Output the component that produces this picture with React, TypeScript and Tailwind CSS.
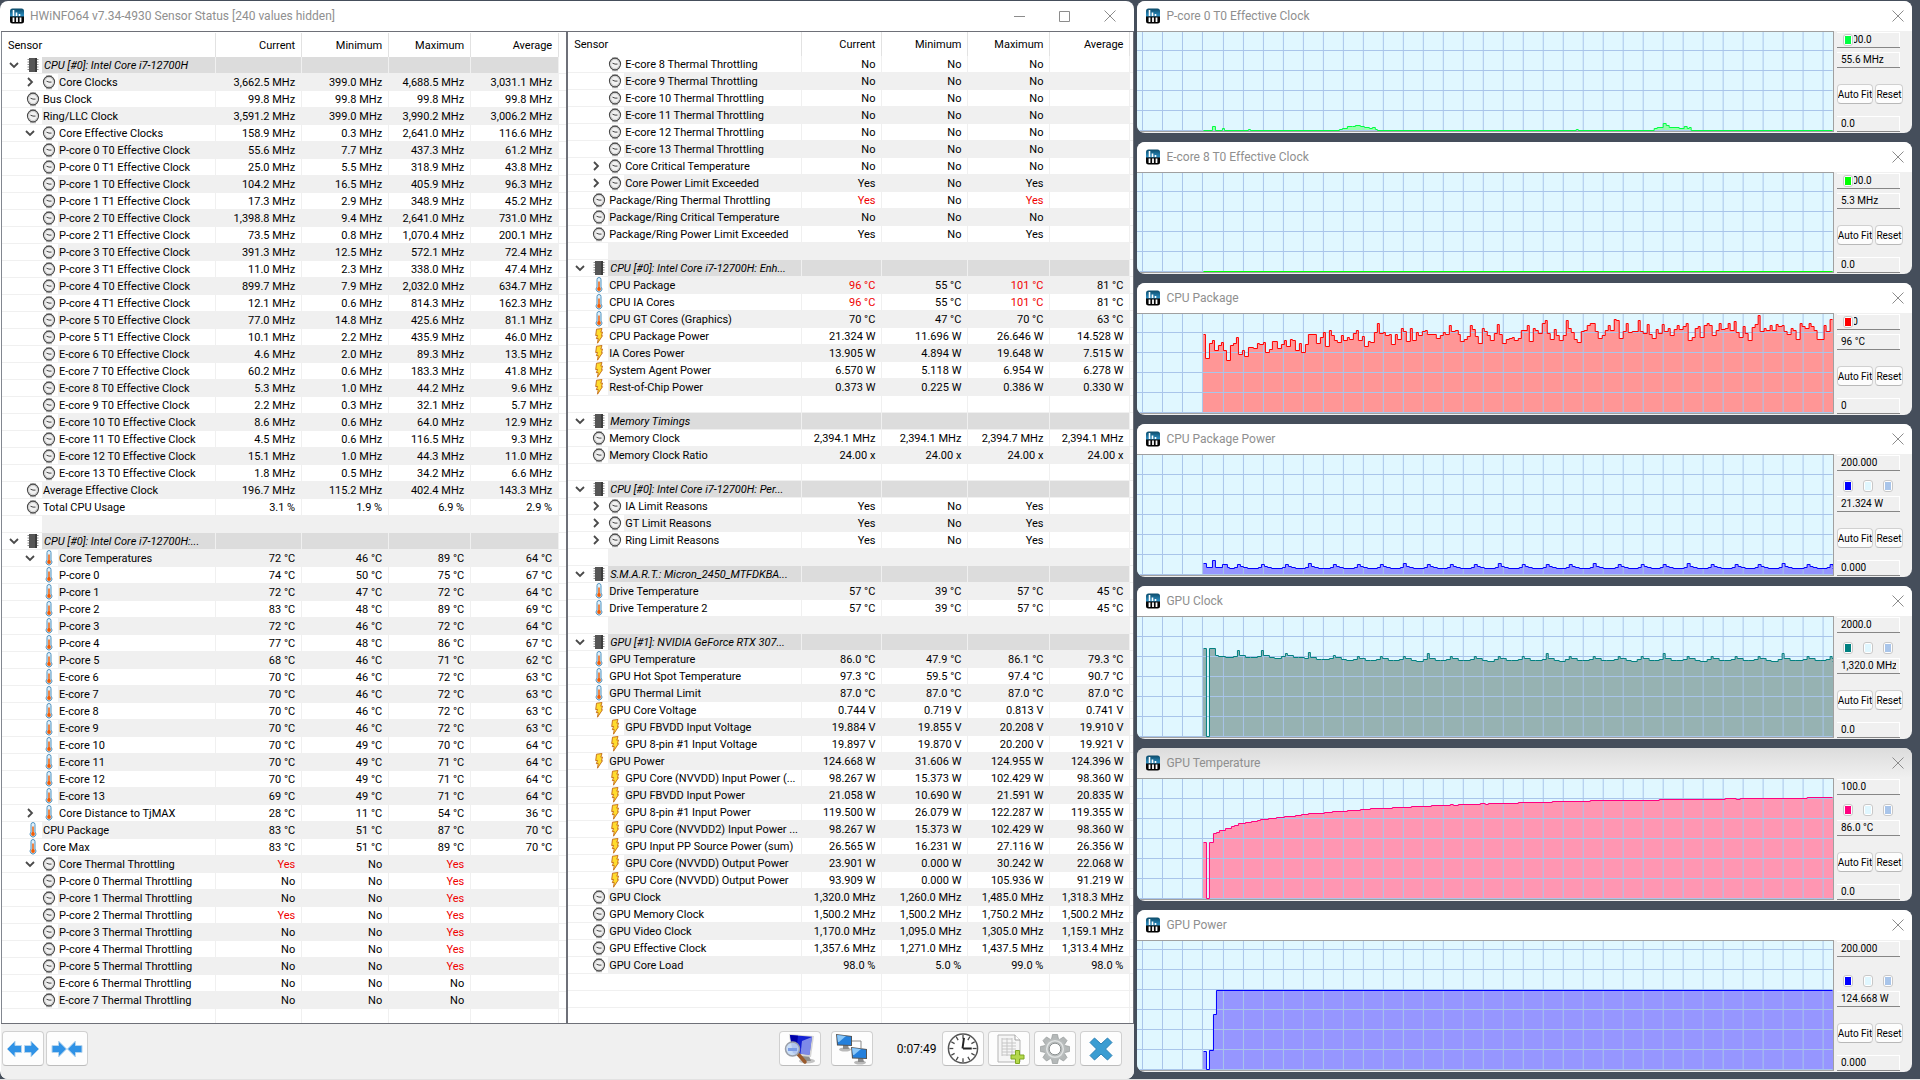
import { useState } from "react";

type IconName = "chip" | "gauge" | "thermo" | "bolt";
type Fold = "" | "open" | "closed";
// depth, fold state, icon, label, current / minimum / maximum / average
// a leading "!" on a value marks it as an alert
type Row = [number, Fold, IconName | "", string, string[]];
type Point = [number, number];

const mhz = (a: string, b: string, c: string, d: string) => [a, b, c, d].map((v) => `${v} MHz`);
const deg = (a: string, b: string, c: string, d: string) => [a, b, c, d].map((v) => `${v} °C`);
const watt = (a: string, b: string, c: string, d: string) => [a, b, c, d].map((v) => `${v} W`);
const volt = (a: string, b: string, c: string, d: string) => [a, b, c, d].map((v) => `${v} V`);
const flag = (a: string, b: string, c: string) => [a, b, c, ""];
const BLANK: Row = [0, "", "", "", []];
const group = (name: string): Row => [0, "open", "chip", name, []];

const LEFT_ROWS: Row[] = [
  group("CPU [#0]: Intel Core i7-12700H"),
  [2, "closed", "gauge", "Core Clocks", mhz("3,662.5", "399.0", "4,688.5", "3,031.1")],
  [1, "", "gauge", "Bus Clock", mhz("99.8", "99.8", "99.8", "99.8")],
  [1, "", "gauge", "Ring/LLC Clock", mhz("3,591.2", "399.0", "3,990.2", "3,006.2")],
  [2, "open", "gauge", "Core Effective Clocks", mhz("158.9", "0.3", "2,641.0", "116.6")],
  [2, "", "gauge", "P-core 0 T0 Effective Clock", mhz("55.6", "7.7", "437.3", "61.2")],
  [2, "", "gauge", "P-core 0 T1 Effective Clock", mhz("25.0", "5.5", "318.9", "43.8")],
  [2, "", "gauge", "P-core 1 T0 Effective Clock", mhz("104.2", "16.5", "405.9", "96.3")],
  [2, "", "gauge", "P-core 1 T1 Effective Clock", mhz("17.3", "2.9", "348.9", "45.2")],
  [2, "", "gauge", "P-core 2 T0 Effective Clock", mhz("1,398.8", "9.4", "2,641.0", "731.0")],
  [2, "", "gauge", "P-core 2 T1 Effective Clock", mhz("73.5", "0.8", "1,070.4", "200.1")],
  [2, "", "gauge", "P-core 3 T0 Effective Clock", mhz("391.3", "12.5", "572.1", "72.4")],
  [2, "", "gauge", "P-core 3 T1 Effective Clock", mhz("11.0", "2.3", "338.0", "47.4")],
  [2, "", "gauge", "P-core 4 T0 Effective Clock", mhz("899.7", "7.9", "2,032.0", "634.7")],
  [2, "", "gauge", "P-core 4 T1 Effective Clock", mhz("12.1", "0.6", "814.3", "162.3")],
  [2, "", "gauge", "P-core 5 T0 Effective Clock", mhz("77.0", "14.8", "425.6", "81.1")],
  [2, "", "gauge", "P-core 5 T1 Effective Clock", mhz("10.1", "2.2", "435.9", "46.0")],
  [2, "", "gauge", "E-core 6 T0 Effective Clock", mhz("4.6", "2.0", "89.3", "13.5")],
  [2, "", "gauge", "E-core 7 T0 Effective Clock", mhz("60.2", "0.6", "183.3", "41.8")],
  [2, "", "gauge", "E-core 8 T0 Effective Clock", mhz("5.3", "1.0", "44.2", "9.6")],
  [2, "", "gauge", "E-core 9 T0 Effective Clock", mhz("2.2", "0.3", "32.1", "5.7")],
  [2, "", "gauge", "E-core 10 T0 Effective Clock", mhz("8.6", "0.6", "64.0", "12.9")],
  [2, "", "gauge", "E-core 11 T0 Effective Clock", mhz("4.5", "0.6", "116.5", "9.3")],
  [2, "", "gauge", "E-core 12 T0 Effective Clock", mhz("15.1", "1.0", "44.3", "11.0")],
  [2, "", "gauge", "E-core 13 T0 Effective Clock", mhz("1.8", "0.5", "34.2", "6.6")],
  [1, "", "gauge", "Average Effective Clock", mhz("196.7", "115.2", "402.4", "143.3")],
  [1, "", "gauge", "Total CPU Usage", ["3.1 %", "1.9 %", "6.9 %", "2.9 %"]],
  BLANK,
  group("CPU [#0]: Intel Core i7-12700H:..."),
  [2, "open", "thermo", "Core Temperatures", deg("72", "46", "89", "64")],
  [2, "", "thermo", "P-core 0", deg("74", "50", "75", "67")],
  [2, "", "thermo", "P-core 1", deg("72", "47", "72", "64")],
  [2, "", "thermo", "P-core 2", deg("83", "48", "89", "69")],
  [2, "", "thermo", "P-core 3", deg("72", "46", "72", "64")],
  [2, "", "thermo", "P-core 4", deg("77", "48", "86", "67")],
  [2, "", "thermo", "P-core 5", deg("68", "46", "71", "62")],
  [2, "", "thermo", "E-core 6", deg("70", "46", "72", "63")],
  [2, "", "thermo", "E-core 7", deg("70", "46", "72", "63")],
  [2, "", "thermo", "E-core 8", deg("70", "46", "72", "63")],
  [2, "", "thermo", "E-core 9", deg("70", "46", "72", "63")],
  [2, "", "thermo", "E-core 10", deg("70", "49", "70", "64")],
  [2, "", "thermo", "E-core 11", deg("70", "49", "71", "64")],
  [2, "", "thermo", "E-core 12", deg("70", "49", "71", "64")],
  [2, "", "thermo", "E-core 13", deg("69", "49", "71", "64")],
  [2, "closed", "thermo", "Core Distance to TjMAX", deg("28", "11", "54", "36")],
  [1, "", "thermo", "CPU Package", deg("83", "51", "87", "70")],
  [1, "", "thermo", "Core Max", deg("83", "51", "89", "70")],
  [2, "open", "gauge", "Core Thermal Throttling", flag("!Yes", "No", "!Yes")],
  [2, "", "gauge", "P-core 0 Thermal Throttling", flag("No", "No", "!Yes")],
  [2, "", "gauge", "P-core 1 Thermal Throttling", flag("No", "No", "!Yes")],
  [2, "", "gauge", "P-core 2 Thermal Throttling", flag("!Yes", "No", "!Yes")],
  [2, "", "gauge", "P-core 3 Thermal Throttling", flag("No", "No", "!Yes")],
  [2, "", "gauge", "P-core 4 Thermal Throttling", flag("No", "No", "!Yes")],
  [2, "", "gauge", "P-core 5 Thermal Throttling", flag("No", "No", "!Yes")],
  [2, "", "gauge", "E-core 6 Thermal Throttling", flag("No", "No", "No")],
  [2, "", "gauge", "E-core 7 Thermal Throttling", flag("No", "No", "No")],
];

const RIGHT_ROWS: Row[] = [
  [2, "", "gauge", "E-core 8 Thermal Throttling", flag("No", "No", "No")],
  [2, "", "gauge", "E-core 9 Thermal Throttling", flag("No", "No", "No")],
  [2, "", "gauge", "E-core 10 Thermal Throttling", flag("No", "No", "No")],
  [2, "", "gauge", "E-core 11 Thermal Throttling", flag("No", "No", "No")],
  [2, "", "gauge", "E-core 12 Thermal Throttling", flag("No", "No", "No")],
  [2, "", "gauge", "E-core 13 Thermal Throttling", flag("No", "No", "No")],
  [2, "closed", "gauge", "Core Critical Temperature", flag("No", "No", "No")],
  [2, "closed", "gauge", "Core Power Limit Exceeded", flag("Yes", "No", "Yes")],
  [1, "", "gauge", "Package/Ring Thermal Throttling", flag("!Yes", "No", "!Yes")],
  [1, "", "gauge", "Package/Ring Critical Temperature", flag("No", "No", "No")],
  [1, "", "gauge", "Package/Ring Power Limit Exceeded", flag("Yes", "No", "Yes")],
  BLANK,
  group("CPU [#0]: Intel Core i7-12700H: Enh..."),
  [1, "", "thermo", "CPU Package", deg("!96", "55", "!101", "81")],
  [1, "", "thermo", "CPU IA Cores", deg("!96", "55", "!101", "81")],
  [1, "", "thermo", "CPU GT Cores (Graphics)", deg("70", "47", "70", "63")],
  [1, "", "bolt", "CPU Package Power", watt("21.324", "11.696", "26.646", "14.528")],
  [1, "", "bolt", "IA Cores Power", watt("13.905", "4.894", "19.648", "7.515")],
  [1, "", "bolt", "System Agent Power", watt("6.570", "5.118", "6.954", "6.278")],
  [1, "", "bolt", "Rest-of-Chip Power", watt("0.373", "0.225", "0.386", "0.330")],
  BLANK,
  group("Memory Timings"),
  [1, "", "gauge", "Memory Clock", mhz("2,394.1", "2,394.1", "2,394.7", "2,394.1")],
  [1, "", "gauge", "Memory Clock Ratio", ["24.00 x", "24.00 x", "24.00 x", "24.00 x"]],
  BLANK,
  group("CPU [#0]: Intel Core i7-12700H: Per..."),
  [2, "closed", "gauge", "IA Limit Reasons", flag("Yes", "No", "Yes")],
  [2, "closed", "gauge", "GT Limit Reasons", flag("Yes", "No", "Yes")],
  [2, "closed", "gauge", "Ring Limit Reasons", flag("Yes", "No", "Yes")],
  BLANK,
  group("S.M.A.R.T.: Micron_2450_MTFDKBA..."),
  [1, "", "thermo", "Drive Temperature", deg("57", "39", "57", "45")],
  [1, "", "thermo", "Drive Temperature 2", deg("57", "39", "57", "45")],
  BLANK,
  group("GPU [#1]: NVIDIA GeForce RTX 307..."),
  [1, "", "thermo", "GPU Temperature", deg("86.0", "47.9", "86.1", "79.3")],
  [1, "", "thermo", "GPU Hot Spot Temperature", deg("97.3", "59.5", "97.4", "90.7")],
  [1, "", "thermo", "GPU Thermal Limit", deg("87.0", "87.0", "87.0", "87.0")],
  [1, "", "bolt", "GPU Core Voltage", volt("0.744", "0.719", "0.813", "0.741")],
  [2, "", "bolt", "GPU FBVDD Input Voltage", volt("19.884", "19.855", "20.208", "19.910")],
  [2, "", "bolt", "GPU 8-pin #1 Input Voltage", volt("19.897", "19.870", "20.200", "19.921")],
  [1, "", "bolt", "GPU Power", watt("124.668", "31.606", "124.955", "124.396")],
  [2, "", "bolt", "GPU Core (NVVDD) Input Power (...", watt("98.267", "15.373", "102.429", "98.360")],
  [2, "", "bolt", "GPU FBVDD Input Power", watt("21.058", "10.690", "21.591", "20.835")],
  [2, "", "bolt", "GPU 8-pin #1 Input Power", watt("119.500", "26.079", "122.287", "119.355")],
  [2, "", "bolt", "GPU Core (NVVDD2) Input Power ...", watt("98.267", "15.373", "102.429", "98.360")],
  [2, "", "bolt", "GPU Input PP Source Power (sum)", watt("26.565", "16.231", "27.116", "26.356")],
  [2, "", "bolt", "GPU Core (NVVDD) Output Power", watt("23.901", "0.000", "30.242", "22.068")],
  [2, "", "bolt", "GPU Core (NVVDD) Output Power", watt("93.909", "0.000", "105.936", "91.219")],
  [1, "", "gauge", "GPU Clock", mhz("1,320.0", "1,260.0", "1,485.0", "1,318.3")],
  [1, "", "gauge", "GPU Memory Clock", mhz("1,500.2", "1,500.2", "1,750.2", "1,500.2")],
  [1, "", "gauge", "GPU Video Clock", mhz("1,170.0", "1,095.0", "1,305.0", "1,159.1")],
  [1, "", "gauge", "GPU Effective Clock", mhz("1,357.6", "1,271.0", "1,437.5", "1,313.4")],
  [1, "", "gauge", "GPU Core Load", ["98.0 %", "5.0 %", "99.0 %", "98.0 %"]],
];

// ---- graph traces: [x, y] steps, y measured from the top of the plot ----

const P_CORE: Point[] = [
  [65, 98], [74, 94], [77, 98], [84, 96], [86, 98], [110, 97], [112, 98], [201, 97], [204, 96], [209, 94],
  [214, 94], [217, 93], [222, 94], [226, 95], [231, 96], [234, 95], [237, 97], [239, 98], [438, 97], [440, 98],
  [516, 96], [519, 95], [525, 91], [528, 93], [531, 95], [541, 96], [546, 94], [549, 96], [551, 95], [553, 98],
];

const E_CORE: Point[] = [[65, 98]];

// logged at three units per pixel
const PACKAGE_LOG =
  "9:64 16:136 28:91 37:82 43:112 55:97 64:88 70:112 79:142 91:97 100:91 108:73 115:124 127:112 133:130 145:103 " +
  "160:106 172:91 178:94 190:88 196:118 208:109 217:85 232:106 244:94 253:82 259:100 271:79 277:82 286:112 298:91 " +
  "304:118 316:94 325:64 349:91 361:73 370:58 376:100 388:52 394:67 403:82 412:88 424:67 430:82 442:73 448:79 " +
  "460:61 469:52 475:82 487:70 493:100 505:85 511:88 523:58 532:31 538:61 550:58 556:67 568:64 574:94 586:64 " +
  "592:79 604:46 610:55 619:85 631:46 637:82 649:58 655:67 667:55 676:52 682:64 709:76 721:67 730:58 736:64 " +
  "748:37 754:55 766:52 773:64 781:85 793:79 802:70 811:37 817:49 826:70 835:91 847:46 853:55 862:67 871:82 " +
  "883:61 892:34 898:64 907:91 919:79 928:76 937:73 943:82 955:76 964:52 982:37 988:85 1000:46 1006:52 1015:61 " +
  "1027:31 1036:22 1042:61 1051:79 1063:49 1069:67 1078:82 1090:67 1099:22 1105:46 1114:58 1123:79 1132:88 " +
  "1144:55 1153:52 1162:37 1171:31 1186:55 1195:76 1207:67 1216:52 1225:37 1231:52 1243:19 1249:22 1258:76 " +
  "1270:55 1279:31 1285:58 1297:55 1315:22 1321:55 1330:61 1342:34 1348:64 1357:76 1369:49 1375:61 1387:34 " +
  "1393:55 1405:46 1411:67 1423:49 1432:37 1438:49 1450:40 1459:31 1465:82 1477:73 1486:46 1495:40 1501:73 " +
  "1513:37 1522:31 1528:37 1537:67 1549:52 1558:31 1564:49 1576:46 1585:31 1591:52 1603:25 1609:58 1618:73 " +
  "1630:40 1636:61 1645:82 1657:43 1666:34 1675:7 1681:55 1693:46 1699:52 1711:37 1717:52 1729:34 1735:40 " +
  "1747:37 1753:55 1762:64 1774:46 1780:52 1789:79 1801:31 1807:40 1816:46 1828:31 1834:40 1843:52 1852:79 " +
  "1873:37 1879:55 1891:19";

const PACKAGE: Point[] = PACKAGE_LOG.split(" ").map((pair) => {
  const [x, y] = pair.split(":").map(Number);
  return [62 + Math.round(x / 3), Math.round((y - 3) / 3)];
});

const PULSES = [
  100, 124, 148, 171, 196, 220, 243, 266, 290, 313, 337, 361, 385, 409, 432, 456, 481, 504, 526, 550, 574, 598, 621,
  645, 670, 693,
];

const PACKAGE_POWER: Point[] = [
  [65, 108], [68, 112], [74, 105], [77, 112], [84, 109], [89, 112], [91, 113],
  ...PULSES.flatMap((x, i): Point[] => [
    [x - 4, 112],
    [x - 1, i % 4 === 3 ? 108 : 109],
    [x + 2, 111],
    [x + 5, 112],
    [x + 9, 113],
  ]),
];

const GPU_CLOCK: Point[] = [
  [65, 31], [68, 119], [71, 31], [77, 38], [80, 39], [87, 40],
  ...PULSES.flatMap((x, i): Point[] => {
    const base = i < 3 ? 40 : i < 5 ? 42 : 43;
    const tall = i < 2 || i === 8 || i === 18 || i % 5 === 3;
    return [
      [x - 5, base - 1],
      [x - 1, base - (tall ? 7 : 4)],
      [x + 1, base - 2],
      [x + 7, base],
      [x + 12, i % 3 === 1 ? base + 1 : base],
    ];
  }),
];

const GPU_TEMP: Point[] = [
  [65, 63], [68, 119], [71, 63], [75, 54], [78, 53], [81, 51], [87, 49], [93, 47], [96, 46], [100, 44], [107, 43],
  [113, 42], [119, 41], [122, 40], [130, 39], [138, 38], [146, 37], [157, 36], [163, 35], [170, 34], [186, 33],
  [194, 32], [209, 31], [222, 30], [232, 29], [254, 28], [273, 27], [293, 26], [312, 25], [315, 26], [320, 25],
  [342, 24], [347, 25], [350, 24], [380, 23], [414, 22], [452, 21], [521, 20], [587, 19], [598, 20], [602, 19],
  [669, 18],
];

const GPU_POWER: Point[] = [[65, 110], [68, 128], [71, 109], [75, 73], [78, 49]];

type GraphProps = {
  title: string;
  top: string;
  value: string;
  bottom: string;
  height: number;
  line: string;
  fill: string;
  points: Point[];
  compact?: boolean;
  shaded?: boolean;
};

const GRAPHS: GraphProps[] = [
  { title: "P-core 0 T0 Effective Clock", top: "2000.0", value: "55.6 MHz", bottom: "0.0", height: 99, line: "#00ff40", fill: "#96ffac", points: P_CORE, compact: true },
  { title: "E-core 8 T0 Effective Clock", top: "2000.0", value: "5.3 MHz", bottom: "0.0", height: 99, line: "#00ff00", fill: "#96ff96", points: E_CORE, compact: true },
  { title: "CPU Package", top: "100", value: "96 °C", bottom: "0", height: 99, line: "#ff0000", fill: "#ff9696", points: PACKAGE, compact: true },
  { title: "CPU Package Power", top: "200.000", value: "21.324 W", bottom: "0.000", height: 120, line: "#0000ff", fill: "#9696ff", points: PACKAGE_POWER },
  { title: "GPU Clock", top: "2000.0", value: "1,320.0 MHz", bottom: "0.0", height: 120, line: "#008080", fill: "#96b2b2", points: GPU_CLOCK },
  { title: "GPU Temperature", top: "100.0", value: "86.0 °C", bottom: "0.0", height: 120, line: "#ff0080", fill: "#ff96b2", points: GPU_TEMP, shaded: true },
  { title: "GPU Power", top: "200.000", value: "124.668 W", bottom: "0.000", height: 129, line: "#0000ff", fill: "#9696ff", points: GPU_POWER },
];

function Logo() {
  return (
    <svg width="16" height="16" viewBox="0 0 16 16" className="shrink-0" aria-hidden="true">
      <defs>
        <linearGradient id="logo" x1="0" y1="0" x2="0" y2="1">
          <stop offset="0" stopColor="#0c4a68" />
          <stop offset="0.5" stopColor="#2b8fc4" />
          <stop offset="0.56" stopColor="#0a0a0a" />
          <stop offset="1" stopColor="#000" />
        </linearGradient>
      </defs>
      <rect x="1" y="0.5" width="14" height="15" rx="2.5" fill="url(#logo)" />
      <path d="M4.5 2v6M7.5 4.5v3.5M10.5 6v2" stroke="#fff" strokeWidth="1.6" />
      <path d="M4.5 9.5v4.5M8 9.5v4.5M11.5 9.5v4.5" stroke="#fff" strokeWidth="1.8" />
    </svg>
  );
}

function SensorIcon({ name }: { name: IconName }) {
  if (name === "chip") {
    return (
      <svg width="16" height="16" viewBox="0 0 16 16" aria-hidden="true">
        <path d="M2.500 2.500h11M2.500 5h11M2.500 7.500h11M2.500 10h11M2.500 12.500h11" stroke="#8c8c8c" />
        <rect x="4" y="1" width="8" height="14" fill="#565656" />
        <path d="M10 1h2v14h-2z" fill="#3c3c3c" />
      </svg>
    );
  }
  if (name === "gauge") {
    return (
      <svg width="16" height="16" viewBox="0 0 16 16" aria-hidden="true">
        <path d="M5 2h6M5 14.500h6" stroke="#b8b8b8" strokeWidth="1.500" />
        <ellipse cx="8" cy="8" rx="5.500" ry="5.800" fill="#f1f1f1" stroke="#4a4a4a" strokeWidth="1.200" />
        <ellipse cx="8" cy="8" rx="4.300" ry="4.600" fill="none" stroke="#d0d0d0" />
        <path d="M5.500 7.200l2.500.9h2.500" fill="none" stroke="#444" />
      </svg>
    );
  }
  if (name === "thermo") {
    return (
      <svg width="16" height="16" viewBox="0 0 16 16" aria-hidden="true">
        <path d="M6 2.500a2 2 0 0 1 4 0v7.500a2.900 2.900 0 1 1-4 0z" fill="#e2f1fb" stroke="#4f93c0" />
        <path d="M8 4.500v7" stroke="#f26a1b" strokeWidth="1.600" />
        <circle cx="8" cy="12" r="1.900" fill="#f25c05" />
      </svg>
    );
  }
  return (
    <svg width="16" height="16" viewBox="0 0 16 16" aria-hidden="true">
      <path
        d="M5.500 1.200l5.500-.7-1.200 3.700 1.700-.2-1 3.700 1 0-5 7.500.7-4.800-1.900.3 1.300-3.300-1.900.2z"
        fill="#ffdc2e"
        stroke="#c26a16"
        strokeWidth="0.900"
      />
    </svg>
  );
}

function Chevron({ fold }: { fold: Fold }) {
  if (!fold) return null;
  return (
    <svg width="10" height="10" viewBox="0 0 10 10" aria-hidden="true">
      <path
        d={fold === "open" ? "M1 3l4 4 4-4" : "M3 1l4 4-4 4"}
        fill="none"
        stroke="#4a4a4a"
        strokeWidth="1.800"
      />
    </svg>
  );
}

function SensorRow({ row, striped }: { row: Row; striped: boolean }) {
  const [depth, fold, icon, label, values] = row;
  const isGroup = icon === "chip";
  const tone = isGroup ? "bg-[#dcdcdc]" : striped ? "bg-[#f0f0f0]" : "bg-white";

  return (
    <tr>
      <td className="border-b border-[#f0f0f0] p-0">
        <div className={`flex h-4 items-center ${depth === 2 ? "pl-5" : "pl-1"}`}>
          <span className="flex w-4 shrink-0 justify-center">
            <Chevron fold={fold} />
          </span>
          <span className="ml-[3px] flex w-4 shrink-0">{icon && <SensorIcon name={icon} />}</span>
          <span
            className={`ml-px h-4 min-w-0 flex-1 truncate leading-[18px] ${tone} ${isGroup ? "pl-0.5 italic" : "pl-px"}`}
          >
            {label}
          </span>
        </div>
      </td>
      {[0, 1, 2, 3].map((i) => {
        const text = values[i] ?? "";
        const alert = text.startsWith("!");
        return (
          <td key={i} className={`border-b border-l border-[#f0f0f0] p-0 ${tone}`}>
            <div
              className={`h-4 pr-1.5 text-right leading-[18px] whitespace-nowrap ${alert ? "text-[#f00000]" : ""}`}
            >
              {alert ? text.slice(1) : text}
            </div>
          </td>
        );
      })}
      <td className="border-b border-l border-[#f0f0f0] p-0" />
    </tr>
  );
}

function SensorTable({ rows, widths, spare }: { rows: Row[]; widths: string[]; spare: number }) {
  return (
    <table className="w-full table-fixed border-separate border-spacing-0">
      <colgroup>
        <col />
        {widths.map((w, i) => (
          <col key={i} className={w} />
        ))}
      </colgroup>
      <thead>
        <tr className="h-6">
          <th className="p-0 pt-0.5 pl-1.5 text-left font-normal">Sensor</th>
          {["Current", "Minimum", "Maximum", "Average"].map((h) => (
            <th key={h} className="border-l border-[#e2e2e2] p-0 pt-0.5 pr-1.5 text-right font-normal">
              {h}
            </th>
          ))}
          <th className="border-l border-[#e2e2e2] p-0" />
        </tr>
      </thead>
      <tbody>
        {rows.map((row, i) => (
          <SensorRow key={i} row={row} striped={i % 2 === 1} />
        ))}
        {Array.from({ length: spare }, (_, i) => (
          <SensorRow key={`spare-${i}`} row={BLANK} striped={false} />
        ))}
      </tbody>
    </table>
  );
}

function ToolButton({ label, children }: { label: string; children: React.ReactNode }) {
  return (
    <button
      aria-label={label}
      className="flex h-[35px] w-[42px] items-center justify-center rounded border border-[#d0d0d0] border-b-[#bcbcbc] bg-[#fdfdfd]"
    >
      {children}
    </button>
  );
}

function Monitor({ x, y }: { x: number; y: number }) {
  return (
    <g transform={`translate(${x} ${y})`}>
      <ellipse cx="9" cy="15.500" rx="6" ry="2" fill="#b9b9b9" />
      <path d="M7 11h5l1 4H7z" fill="#8a8a8a" />
      <path d="M0 0l16 2v10L1 11.500z" fill="#555" />
      <path d="M1 1l14 1.800v8.300L2 10.600z" fill="#2580dc" />
      <path d="M1 1l9 1.100L3 8 2 8z" fill="#8cc8f8" />
    </g>
  );
}

function Toolbar() {
  return (
    <div className="flex items-center gap-1 bg-[#f0f0f0] pt-[7px] pr-3 pb-[13px]">
      <div className="flex items-center gap-0.5 pl-px">
        <ToolButton label="Expand columns">
          <svg width="32" height="20" viewBox="0 0 32 20">
            <path d="M0 10l8-8v4.500h6.500v7H8V18z" fill="#2f92e6" stroke="#b4d4ee" />
            <path d="M32 10l-8-8v4.500h-6.500v7H24V18z" fill="#2f92e6" stroke="#b4d4ee" />
          </svg>
        </ToolButton>
        <ToolButton label="Shrink columns">
          <svg width="32" height="20" viewBox="0 0 32 20">
            <path d="M15.500 10l-8-8v4.500H1v7h6.500V18z" fill="#2f92e6" stroke="#b4d4ee" />
            <path d="M16.500 10l8-8v4.500H31v7h-6.500V18z" fill="#2f92e6" stroke="#b4d4ee" />
          </svg>
        </ToolButton>
      </div>

      <div className="ml-auto flex items-center gap-2.5">
        <ToolButton label="System summary">
          <svg width="32" height="32" viewBox="0 0 32 32">
            <ellipse cx="23" cy="28" rx="8" ry="2.500" fill="#c4c4c4" />
            <path d="M18 23h7l2 5h-9z" fill="#8f8f8f" />
            <path d="M5 1l25 2-3 21L8 22z" fill="#d6d6d6" />
            <path d="M6 2l22 1.800-2.500 18L9 20z" fill="#1522d4" />
            <path d="M6 2l8 .7L12 21l-3-1z" fill="#0000a8" />
            <path d="M18 8l10-4-2.500 17.800-9-1z" fill="#a9b6f2" opacity=".7" />
            <path d="M14 21l7 8" stroke="#9a5a2c" strokeWidth="3.500" strokeLinecap="round" />
            <circle cx="8.500" cy="16" r="7" fill="#c4daf6" fillOpacity=".9" stroke="#9a9fa8" strokeWidth="1.500" />
            <path d="M4 15h9v3H4z" fill="#7a9be6" />
          </svg>
        </ToolButton>
        <ToolButton label="Remote sensors">
          <svg width="32" height="32" viewBox="0 0 32 32">
            <path d="M14 8h11v7" fill="none" stroke="#8b8b8b" />
            <Monitor x={0} y={1} />
            <Monitor x={15} y={14} />
          </svg>
        </ToolButton>
      </div>
      <time className="mr-0.5 ml-5 text-[12px]">0:07:49</time>
      <ToolButton label="Reset timer">
        <svg width="34" height="33" viewBox="0 0 34 34">
          <circle cx="17" cy="17" r="15" fill="#fff" stroke="#555" strokeWidth="1.500" />
          {Array.from({ length: 12 }, (_, i) => (
            <path key={i} d="M17 3v4" stroke="#444" strokeWidth="1.300" transform={`rotate(${i * 30} 17 17)`} />
          ))}
          <path d="M16.500 17L18 6M17 17h9" fill="none" stroke="#222" strokeWidth="2" />
        </svg>
      </ToolButton>
      <ToolButton label="Start logging">
        <svg width="32" height="32" viewBox="0 0 32 32">
          <path d="M5 2h17l5 5v22H5z" fill="#f6f6f6" stroke="#b5b5b5" />
          <path d="M22 2v5h5" fill="#fff" stroke="#a5a5a5" />
          <path d="M9 6h10M9 10h14M9 13h14M9 16h14M9 19h14M9 22h10M9 5v18M14 5v18M19 5v18" stroke="#c6c6c6" />
          <path d="M22.500 17.500h4v4.500h4.500v4h-4.500v4.500h-4v-4.500H18v-4h4.500z" fill="#b4d84c" stroke="#7fa822" />
        </svg>
      </ToolButton>
      <ToolButton label="Settings">
        <svg width="32" height="32" viewBox="0 0 32 32">
          {Array.from({ length: 8 }, (_, i) => (
            <path
              key={i}
              d="M12.500 6l1-4.500h5l1 4.500z"
              fill="#b4b8b8"
              stroke="#8b9090"
              strokeWidth=".6"
              transform={`rotate(${i * 45} 16 16)`}
            />
          ))}
          <circle cx="16" cy="16" r="8.500" fill="none" stroke="#b8bcbc" strokeWidth="5" />
          <circle cx="16" cy="16" r="5.800" fill="#fff" stroke="#8b9090" />
          <circle cx="16" cy="16" r="8.300" fill="none" stroke="#dfe2e2" strokeWidth="1.500" />
        </svg>
      </ToolButton>
      <ToolButton label="Close sensors">
        <svg width="26" height="26" viewBox="0 0 26 26">
          <path
            d="M6.500 2L13 8l6.500-6L24 6.500 17.500 13l6.500 6.500-4.500 4.500L13 18l-6.500 6L2 19.500 8.500 13 2 6.500z"
            fill="#3b9dd2"
            stroke="#2a80b4"
            strokeLinejoin="round"
          />
        </svg>
      </ToolButton>
    </div>
  );
}

function CloseGlyph() {
  return (
    <svg width="12" height="12" viewBox="0 0 12 12" aria-hidden="true">
      <path d="M.5.5l11 11M11.500.5l-11 11" stroke="#8c8c8c" />
    </svg>
  );
}

function MainWindow() {
  return (
    <main className="flex min-w-0 flex-[1134] flex-col overflow-hidden rounded-lg bg-white pl-px">
      <header className="flex h-[30px] items-center pr-4.5 pl-2">
        <Logo />
        <h1 className="ml-[5px] flex-1 text-[12px] text-[#8f8f8f]">
          HWiNFO64 v7.34-4930 Sensor Status [240 values hidden]
        </h1>
        <div className="flex items-center gap-[34px]">
          <button aria-label="Minimize">
            <svg width="11" height="11" viewBox="0 0 11 11">
              <path d="M0 5.500h11" stroke="#8c8c8c" />
            </svg>
          </button>
          <button aria-label="Maximize">
            <svg width="11" height="11" viewBox="0 0 11 11">
              <path d="M.5.5h10v10H.5z" fill="none" stroke="#8c8c8c" />
            </svg>
          </button>
          <button aria-label="Close">
            <CloseGlyph />
          </button>
        </div>
      </header>

      <div className="grid h-[993px] grid-cols-[565fr_568fr] border-y border-[#6e7078] text-[11px] leading-4">
        <section className="min-w-0 overflow-hidden border-l border-[#828790] pt-px">
          <SensorTable rows={LEFT_ROWS} widths={["w-[86px]", "w-[87px]", "w-[82px]", "w-[88px]", "w-2"]} spare={1} />
        </section>
        <section className="min-w-0 overflow-hidden border-x border-l-2 border-[#6e7078]">
          <SensorTable rows={RIGHT_ROWS} widths={["w-[80px]", "w-[86px]", "w-[82px]", "w-[80px]", "w-1"]} spare={3} />
        </section>
      </div>
      <Toolbar />
    </main>
  );
}

function Plot({ height, line, fill, points }: GraphProps) {
  const steps = points
    .map(([x, y], i) => {
      const px = x + 1.5;
      const py = y + 0.5;
      return i === 0 ? `M${px} ${py}` : `H${px}V${py}`;
    })
    .join("");
  const path = `${steps}H696`;
  // the time axis slips by one pixel where the trace begins
  const columns = Array.from({ length: 35 }, (_, i) => `M${(i < 4 ? 5.5 : 6.5) + i * 20} 0V${height}`).join("");
  const rows = Array.from({ length: 7 }, (_, i) => `M0 ${height - 0.5 - i * 20}H696`).join("");

  return (
    <svg
      viewBox={`0 0 696 ${height}`}
      height={height}
      preserveAspectRatio="none"
      shapeRendering="crispEdges"
      className="block w-full bg-[#e0f7ff]"
    >
      <path d={`${path}V${height}H66Z`} fill={fill} />
      <path d={columns + rows} stroke="#a9c5ea" fill="none" />
      <path d={path} fill="none" stroke={line} />
    </svg>
  );
}

function Swatch({ label, color }: { label: string; color: string }) {
  return (
    <button
      aria-label={label}
      className="block h-3 w-2.5 rounded-[3px] border border-[#c8c8c8] bg-white p-px"
    >
      <span className="block h-2 w-1.5" style={{ backgroundColor: color }} />
    </button>
  );
}

const FIELD =
  "block h-4 w-[63px] border-b border-[#868686] bg-[#f0f0f0] px-1 text-[10px] leading-4 outline-none shadow-[inset_0_1px_0_#fff,inset_-1px_0_0_#fff]";

const SMALL_BUTTON =
  "flex h-5 items-center justify-center overflow-hidden rounded border border-[#d0d0d0] border-b-[#b8b8b8] bg-[#fdfdfd] text-[10px] whitespace-nowrap";

function GraphWindow(props: GraphProps) {
  const { title, top, value, bottom, line, compact, shaded } = props;
  const [shown, setShown] = useState(value);

  return (
    <article className="overflow-hidden rounded-lg bg-[#f0f0f0] pb-px">
      <header
        className={`flex h-[30px] items-center pr-2 pl-2 ${
          shaded ? "bg-linear-to-b from-[#dcdcdc] to-[#f0f0f0]" : "bg-white"
        }`}
      >
        <Logo />
        <h2 className="ml-[5px] flex-1 text-[12px] text-[#8f8f8f]">{title}</h2>
        <button aria-label={`Close ${title}`}>
          <CloseGlyph />
        </button>
      </header>
      <div className="flex">
        <div className="min-w-0 flex-1 border border-l-0 border-[#a0a0a0]">
          <Plot {...props} />
        </div>
        <div className="relative flex w-[78px] flex-col pt-px pl-[3px]">
          <input aria-label={`${title} maximum`} className={FIELD} defaultValue={top} />
          <div className="flex-1" />
          {compact ? (
            <div className="absolute top-[3px] left-1 bg-[#f0f0f0] pr-px pl-[5px]">
              <Swatch label="Line colour" color={line} />
            </div>
          ) : (
            <div className="mb-1 ml-1.5 flex gap-2.5">
              <Swatch label="Line colour" color={line} />
              <Swatch label="Background colour" color="#e0f7ff" />
              <Swatch label="Grid colour" color="#a9c5ea" />
            </div>
          )}
          <input aria-label={`${title} value`} className={FIELD} value={shown} readOnly />
          <div className="mt-4 flex gap-0.5">
            <button className={`${SMALL_BUTTON} w-9`}>Auto Fit</button>
            <button onClick={() => setShown(value)} className={`${SMALL_BUTTON} w-7`}>
              Reset
            </button>
          </div>
          <input aria-label={`${title} minimum`} className={`${FIELD} mt-3`} defaultValue={bottom} />
        </div>
      </div>
    </article>
  );
}

export default function App() {
  return (
    <div className="min-h-screen bg-[#454e5b] font-['Roboto',sans-serif] text-black">
      <div className="flex items-start gap-[3px] pt-px pr-2">
        <MainWindow />
        <aside className="flex min-w-0 flex-[775] flex-col gap-[9px]">
          {GRAPHS.map((graph) => (
            <GraphWindow key={graph.title} {...graph} />
          ))}
        </aside>
      </div>
      <footer className="h-0.5 bg-[#e2e2e2]" />
    </div>
  );
}
